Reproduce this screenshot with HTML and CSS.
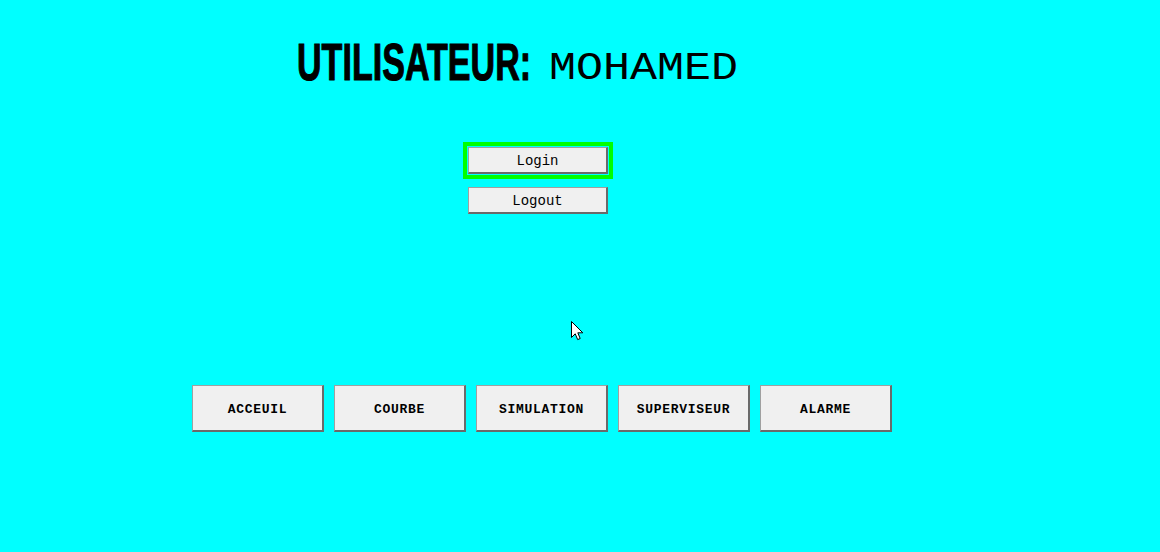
FILE: index.html
```html
<!DOCTYPE html>
<html lang="fr">
<head>
<meta charset="utf-8">
<title>Utilisateur</title>
<link rel="stylesheet" href="styles.css">
</head>
<body>
<div class="page">
  <div class="title">
    <span class="label"><span class="label-text">UTILISATEUR:</span></span>
    <span class="name">MOHAMED</span>
  </div>
  <div class="auth">
    <button class="btn btn-small btn-focus">Login</button>
    <button class="btn btn-small">Logout</button>
  </div>
  <div class="nav">
    <button class="btn btn-nav">ACCEUIL</button>
    <button class="btn btn-nav">COURBE</button>
    <button class="btn btn-nav">SIMULATION</button>
    <button class="btn btn-nav">SUPERVISEUR</button>
    <button class="btn btn-nav">ALARME</button>
  </div>
  <svg class="cursor" width="13" height="20" viewBox="0 0 13 20">
    <path d="M0.5 0.5 L0.5 16.5 L4.2 12.8 L6.7 18.6 L9.2 17.5 L6.8 11.8 L11.8 11.8 Z" fill="#fff" stroke="#000" stroke-width="1" stroke-linejoin="miter"/>
  </svg>
</div>
</body>
</html>
```

FILE: styles.css
```css
html, body {
  margin: 0;
  padding: 0;
  background: #00ffff;
}
.page {
  position: relative;
  width: 1160px;
  height: 552px;
  background: #00ffff;
  overflow: hidden;
}
.title {
  display: flex;
  align-items: baseline;
  margin-top: 38px;
  padding-left: 297px;
  height: 50px;
  line-height: 50px;
}
.label {
  display: inline-block;
  width: 231px;
  white-space: nowrap;
}
.label-text {
  display: inline-block;
  font-family: "Liberation Sans", Arial, sans-serif;
  font-weight: bold;
  font-size: 47px;
  color: #000;
  -webkit-text-stroke: 1px #000;
  transform: scale(0.725, 1.12);
  transform-origin: left 70%;
}
.name {
  display: inline-block;
  margin-left: 21px;
  font-family: "Courier New", "Nimbus Mono PS", FreeMono, "Liberation Mono", monospace;
  font-size: 45px;
  font-weight: normal;
  color: #000;
  transform: scaleY(0.88);
  transform-origin: left 74%;
}
.auth {
  display: flex;
  flex-direction: column;
  gap: 13px;
  margin-top: 59px;
  padding-left: 468px;
}
.btn {
  box-sizing: border-box;
  background: #f0f0f0;
  border-style: solid;
  border-width: 1px 2px 2px 1px;
  border-color: #a0a0a0 #6a6a6a #6a6a6a #a0a0a0;
  font-family: "Courier New", "Nimbus Mono PS", FreeMono, "Liberation Mono", monospace;
  font-size: 14px;
  color: #000;
  padding: 0;
  margin: 0;
  border-radius: 0;
}
.btn-small {
  width: 140px;
  height: 27px;
  padding-top: 1px;
}
.btn-focus {
  outline: 4px solid #00ff00;
  outline-offset: 1px;
}
.nav {
  display: flex;
  gap: 10px;
  margin-top: 171px;
  padding-left: 192px;
}
.btn-nav {
  width: 132px;
  height: 47px;
  font-weight: bold;
  font-size: 13px;
  letter-spacing: 0.7px;
  padding-top: 3px;
}
.cursor {
  position: absolute;
  left: 571px;
  top: 321px;
}
```
